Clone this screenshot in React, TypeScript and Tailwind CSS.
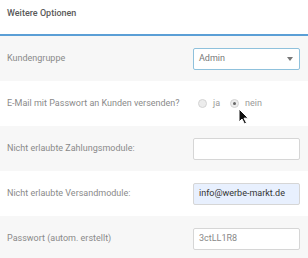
import React from 'react';

function Row({ label, gray, children }: { label: string; gray?: boolean; children?: React.ReactNode }) {
  return (
    <div className={`flex h-[45px] items-center justify-between pl-[7px] pr-[8px] ${gray ? 'bg-[#f7f7f7]' : 'bg-white'}`}>
      <span className="whitespace-nowrap text-[9px] text-[#8a8a8a]">{label}</span>
      {children}
    </div>
  );
}

function TextBox({ value, autofill }: { value?: string; autofill?: boolean }) {
  return (
    <div
      className={`flex h-[22px] w-[107px] items-center whitespace-nowrap rounded-[2px] border border-[#d6d6d6] px-[5px] text-[9px] ${
        autofill ? 'bg-[#e8f0fe] text-[#333]' : 'bg-white text-[#888]'
      }`}
    >
      {value}
    </div>
  );
}

export default function App() {
  return (
    <div className="relative h-[258px] w-[308px] overflow-hidden bg-white" style={{ fontFamily: 'Roboto, "Liberation Sans", sans-serif' }}>
      <div className="flex h-[34px] items-start pl-[7px] pt-[7px]">
        <span className="text-[9px] font-medium text-[#5a5a5a]">Weitere Optionen</span>
      </div>
      <div className="h-[2px] bg-[#5b9fd6]" />
      <Row label="Kundengruppe" gray>
        <div className="flex h-[22px] w-[107px] items-center justify-between rounded-[2px] border border-[#8fc1dc] bg-white pl-[5px] pr-[6px] text-[9px] text-[#777]">
          <span>Admin</span>
          <svg width="6" height="4" viewBox="0 0 6 4">
            <path d="M0 0h6L3 4z" fill="#777" />
          </svg>
        </div>
      </Row>
      <Row label="E-Mail mit Passwort an Kunden versenden?">
        <div className="mr-[38px] flex items-center text-[9px] text-[#999]">
          <span className="h-[9px] w-[9px] rounded-full border border-[#d4d4d4] bg-[#ececec]" />
          <span className="ml-[6px]">ja</span>
          <span className="ml-[10px] flex h-[9px] w-[9px] items-center justify-center rounded-full border border-[#d4d4d4] bg-[#ececec]">
            <span className="h-[3px] w-[3px] rounded-full bg-[#666]" />
          </span>
          <span className="ml-[6px]">nein</span>
        </div>
      </Row>
      <Row label="Nicht erlaubte Zahlungsmodule:" gray>
        <TextBox />
      </Row>
      <Row label="Nicht erlaubte Versandmodule:">
        <TextBox value="info@werbe-markt.de" autofill />
      </Row>
      <Row label="Passwort (autom. erstellt)" gray>
        <TextBox value="3ctLL1R8" />
      </Row>
      <svg className="absolute left-[238px] top-[108px]" width="11" height="17" viewBox="0 0 11 17">
        <path d="M1 1v13l3-3 2.5 5 2-1-2.5-4.8h4.2z" fill="#111" stroke="#fff" strokeWidth="1" />
      </svg>
    </div>
  );
}
